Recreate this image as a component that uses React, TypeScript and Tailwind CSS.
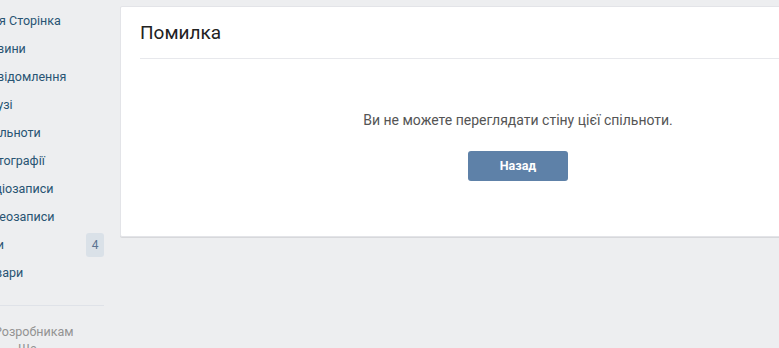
const menu = [
  "Моя Сторінка",
  "Новини",
  "Повідомлення",
  "Друзі",
  "Спільноти",
  "Фотографії",
  "Аудіозаписи",
  "Відеозаписи",
  "Ігри",
  "Товари",
];

export default function App() {
  return (
    <div
      className="h-[348px] w-[779px] overflow-hidden bg-[#edeef0]"
      style={{ fontFamily: "Roboto, 'Open Sans', Arial, sans-serif" }}
    >
      <div className="flex items-start pt-[6px]">
        {/* left menu, partly cut off at the edge */}
        <div className="-ml-[19px] w-[123px] shrink-0 pt-[1px]">
          <ul>
            {menu.map((item) => (
              <li
                key={item}
                className="flex h-[28px] items-center text-[12.5px] text-[#285473]"
              >
                <span>{item}</span>
                {item === "Ігри" && (
                  <span className="ml-auto flex h-[24px] w-[18px] items-center justify-center rounded-[3px] bg-[#dae1e8] text-[12px] text-[#5b7391]">
                    4
                  </span>
                )}
              </li>
            ))}
          </ul>

          <div className="mt-[18px] border-t border-[#dfe2e8]" />

          <div className="pl-[13px] pt-[17px] text-[12.5px] leading-[17px] text-[#939393]">
            <div>Розробникам</div>
            <div className="pl-[24px]">Ще</div>
          </div>
        </div>

        {/* main card */}
        <div className="ml-[16px] w-[796px] shrink-0 rounded-[2px] border border-[#e3e4e8] bg-white shadow-[0_1px_0_0_#d7d8db]">
          <div className="mx-[19px] flex h-[52px] items-center border-b border-[#e7e8ec] pt-[1px]">
            <h1 className="text-[19px] text-[#222]">Помилка</h1>
          </div>

          <div className="flex flex-col items-center pb-[55px] pt-[52px]">
            <p className="text-[14px] leading-[18px] text-[#555]">
              Ви не можете переглядати стіну цієї спільноти.
            </p>
            <button className="mt-[22px] h-[30px] w-[100px] rounded-[3px] bg-[#5e81a8] text-[12.5px] font-bold text-white">
              Назад
            </button>
          </div>
        </div>
      </div>
    </div>
  );
}
